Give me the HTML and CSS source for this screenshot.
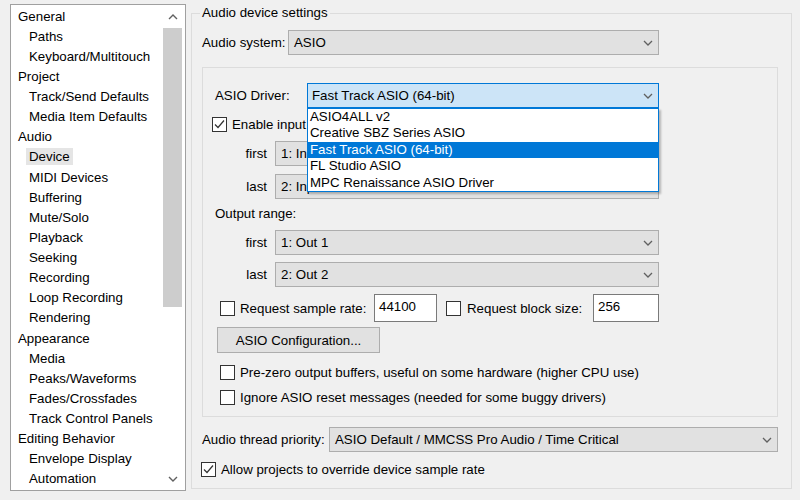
FILE: index.html
```html
<!DOCTYPE html>
<html lang="en">
<head>
    <meta charset="UTF-8">
    <title>Preferences - Audio Device</title>
    <link rel="stylesheet" href="styles.css">
</head>
<body>
    <div class="window">
        <!-- 왼쪽 트리 -->
        <div class="tree">
            <ul class="tree-list">
                <li class="top">General</li>
                <li class="sub">Paths</li>
                <li class="sub">Keyboard/Multitouch</li>
                <li class="top">Project</li>
                <li class="sub">Track/Send Defaults</li>
                <li class="sub">Media Item Defaults</li>
                <li class="top">Audio</li>
                <li class="sub"><span class="current">Device</span></li>
                <li class="sub">MIDI Devices</li>
                <li class="sub">Buffering</li>
                <li class="sub">Mute/Solo</li>
                <li class="sub">Playback</li>
                <li class="sub">Seeking</li>
                <li class="sub">Recording</li>
                <li class="sub">Loop Recording</li>
                <li class="sub">Rendering</li>
                <li class="top">Appearance</li>
                <li class="sub">Media</li>
                <li class="sub">Peaks/Waveforms</li>
                <li class="sub">Fades/Crossfades</li>
                <li class="sub">Track Control Panels</li>
                <li class="top">Editing Behavior</li>
                <li class="sub">Envelope Display</li>
                <li class="sub">Automation</li>
            </ul>
            <div class="scrollbar">
                <div class="sb-arrow">
                    <svg width="10" height="6" viewBox="0 0 10 6"><path d="M1 5l4-4 4 4" fill="none" stroke="#606060" stroke-width="1.4"/></svg>
                </div>
                <div class="sb-track"><div class="sb-thumb"></div></div>
                <div class="sb-arrow">
                    <svg width="10" height="6" viewBox="0 0 10 6"><path d="M1 1l4 4 4-4" fill="none" stroke="#606060" stroke-width="1.4"/></svg>
                </div>
            </div>
        </div>

        <!-- 오른쪽 설정 -->
        <fieldset class="group">
            <legend>Audio device settings</legend>

            <div class="row system-row">
                <span class="label system-label">Audio system:</span>
                <div class="combo system-combo">
                    <span>ASIO</span>
                    <svg class="chev" width="10" height="6" viewBox="0 0 10 6"><path d="M1 1l4 4 4-4" fill="none" stroke="#606060" stroke-width="1.3"/></svg>
                </div>
            </div>

            <div class="inner">
                <div class="row driver-row">
                    <span class="label driver-label">ASIO Driver:</span>
                    <div class="combo driver-combo open">
                        <span>Fast Track ASIO (64-bit)</span>
                        <svg class="chev" width="10" height="6" viewBox="0 0 10 6"><path d="M1 1l4 4 4-4" fill="none" stroke="#606060" stroke-width="1.3"/></svg>
                        <ul class="dropdown">
                            <li>ASIO4ALL v2</li>
                            <li>Creative SBZ Series ASIO</li>
                            <li class="selected">Fast Track ASIO (64-bit)</li>
                            <li>FL Studio ASIO</li>
                            <li>MPC Renaissance ASIO Driver</li>
                        </ul>
                    </div>
                </div>

                <div class="row check-row enable-row">
                    <span class="check checked">
                        <svg width="13" height="13" viewBox="0 0 13 13"><path d="M2 6.5l3 3 6-7" fill="none" stroke="#333" stroke-width="1.2"/></svg>
                    </span>
                    <span>Enable input range:</span>
                </div>

                <div class="row range-row in-first">
                    <span class="range-label">first</span>
                    <div class="combo range-combo">
                        <span>1: Input 1</span>
                        <svg class="chev" width="10" height="6" viewBox="0 0 10 6"><path d="M1 1l4 4 4-4" fill="none" stroke="#606060" stroke-width="1.3"/></svg>
                    </div>
                </div>
                <div class="row range-row in-last">
                    <span class="range-label">last</span>
                    <div class="combo range-combo">
                        <span>2: Input 2</span>
                        <svg class="chev" width="10" height="6" viewBox="0 0 10 6"><path d="M1 1l4 4 4-4" fill="none" stroke="#606060" stroke-width="1.3"/></svg>
                    </div>
                </div>

                <div class="row output-label">Output range:</div>

                <div class="row range-row out-first">
                    <span class="range-label">first</span>
                    <div class="combo range-combo">
                        <span>1: Out 1</span>
                        <svg class="chev" width="10" height="6" viewBox="0 0 10 6"><path d="M1 1l4 4 4-4" fill="none" stroke="#606060" stroke-width="1.3"/></svg>
                    </div>
                </div>
                <div class="row range-row out-last">
                    <span class="range-label">last</span>
                    <div class="combo range-combo">
                        <span>2: Out 2</span>
                        <svg class="chev" width="10" height="6" viewBox="0 0 10 6"><path d="M1 1l4 4 4-4" fill="none" stroke="#606060" stroke-width="1.3"/></svg>
                    </div>
                </div>

                <div class="row request-row">
                    <span class="check"></span>
                    <span class="req-label rate-label">Request sample rate:</span>
                    <span class="textbox rate-box">44100</span>
                    <span class="check block-check"></span>
                    <span class="req-label block-label">Request block size:</span>
                    <span class="textbox block-box">256</span>
                </div>

                <div class="row">
                    <button class="button">ASIO Configuration...</button>
                </div>

                <div class="row check-row opt-row prezero-row">
                    <span class="check"></span>
                    <span>Pre-zero output buffers, useful on some hardware (higher CPU use)</span>
                </div>
                <div class="row check-row opt-row ignore-row">
                    <span class="check"></span>
                    <span>Ignore ASIO reset messages (needed for some buggy drivers)</span>
                </div>
            </div>

            <div class="row thread-row">
                <span class="label thread-label">Audio thread priority:</span>
                <div class="combo thread-combo">
                    <span>ASIO Default / MMCSS Pro Audio / Time Critical</span>
                    <svg class="chev" width="10" height="6" viewBox="0 0 10 6"><path d="M1 1l4 4 4-4" fill="none" stroke="#606060" stroke-width="1.3"/></svg>
                </div>
            </div>

            <div class="row check-row allow-row">
                <span class="check checked">
                    <svg width="13" height="13" viewBox="0 0 13 13"><path d="M2 6.5l3 3 6-7" fill="none" stroke="#333" stroke-width="1.2"/></svg>
                </span>
                <span>Allow projects to override device sample rate</span>
            </div>
        </fieldset>
    </div>
</body>
</html>
```

FILE: styles.css
```css
body {
    margin: 0;
    background: #f0f0f0;
    font-family: "Liberation Sans", Arial, sans-serif;
    font-size: 13.3px;
    color: #000;
}

.window {
    display: flex;
    align-items: flex-start;
    padding: 4px 0 0 10px;
    height: 496px;
    box-sizing: border-box;
}

/* tree */
.tree {
    display: flex;
    width: 176px;
    height: 487px;
    box-sizing: border-box;
    border: 1px solid #a0a0a0;
    background: #fff;
}

.tree-list {
    flex: 1;
    list-style: none;
    margin: 0;
    padding: 1.5px 0 0 0;
}

.tree-list li {
    height: 20.13px;
    line-height: 20.13px;
    white-space: nowrap;
}

.tree-list .top {
    padding-left: 7px;
}

.tree-list .sub {
    padding-left: 18px;
}

.current {
    display: inline-block;
    background: #e5e5e5;
    line-height: 17px;
    padding: 0 3px;
    margin-left: -3px;
}

.scrollbar {
    width: 19px;
    margin-right: 3px;
    display: flex;
    flex-direction: column;
    background: #fff;
}

.sb-arrow {
    height: 23px;
    display: flex;
    align-items: center;
    justify-content: center;
}

.sb-track {
    flex: 1;
}

.sb-thumb {
    height: 279px;
    background: #cdcdcd;
}

/* group */
.group {
    margin: 0 0 0 5px;
    padding: 0 13px 0 10px;
    width: 601px;
    height: 485px;
    box-sizing: border-box;
    border: 1px solid #dcdcdc;
}

.group legend {
    padding: 0 2px;
    margin-left: -2px;
    line-height: 18px;
}

.row {
    display: flex;
    align-items: center;
}

.combo {
    position: relative;
    display: flex;
    align-items: center;
    justify-content: space-between;
    height: 25px;
    box-sizing: border-box;
    padding: 0 5px 0 5px;
    background: #e1e1e1;
    border: 1px solid #adadad;
    white-space: nowrap;
}

.chev {
    flex: none;
}

.system-row {
    margin-top: 8px;
}

.system-label {
    width: 86px;
}

.system-combo {
    width: 371px;
}

.inner {
    margin-top: 12px;
    height: 350px;
    box-sizing: border-box;
    border: 1px solid #dcdcdc;
    padding: 0 0 0 12px;
}

.driver-row {
    margin-top: 15px;
}

.driver-label {
    width: 92px;
}

.driver-combo {
    width: 352px;
    background: #cce4f7;
    border-color: #0078d7;
    padding-left: 4px;
}

.dropdown {
    position: absolute;
    top: 24px;
    left: -1px;
    width: 352px;
    box-sizing: border-box;
    margin: 0;
    padding: 0;
    list-style: none;
    background: #fff;
    border: 1px solid #0078d7;
    box-shadow: 2px 2px 2px rgba(0, 0, 0, 0.25);
    z-index: 2;
}

.dropdown li {
    height: 16.4px;
    line-height: 16.4px;
    padding-left: 2px;
}

.dropdown .selected {
    background: #0078d7;
    color: #fff;
}

.check {
    flex: none;
    display: inline-flex;
    align-items: center;
    justify-content: center;
    width: 15px;
    height: 15px;
    box-sizing: border-box;
    border: 1px solid #333;
    background: #fff;
    margin-right: 5px;
}

.enable-row {
    margin-top: 9px;
    margin-left: -3px;
}

.range-label {
    width: 52px;
    text-align: right;
    margin-right: 8px;
}

.range-combo {
    width: 384px;
}

.in-first {
    margin-top: 9px;
}

.in-last {
    margin-top: 8px;
}

.output-label {
    margin-top: 5px;
    height: 18px;
}

.out-first {
    margin-top: 8px;
}

.out-last {
    margin-top: 7px;
}

.request-row {
    margin-top: 7px;
    margin-left: 5px;
}

.req-label {
    white-space: nowrap;
}

.rate-label {
    width: 134px;
}

.block-label {
    width: 126px;
}

.block-check {
    margin-left: 9px;
    margin-right: 6px;
}

.textbox {
    height: 28px;
    box-sizing: border-box;
    border: 1px solid #7a7a7a;
    background: #fff;
    padding: 3px 0 0 4px;
    line-height: 17px;
}

.rate-box {
    width: 63px;
}

.block-box {
    width: 66px;
}

.button {
    margin: 5px 0 0 2px;
    width: 163px;
    height: 26px;
    background: #e1e1e1;
    border: 1px solid #adadad;
    font: inherit;
    color: #000;
    padding: 0;
}

.opt-row {
    margin-left: 5px;
}

.prezero-row {
    margin-top: 12px;
}

.ignore-row {
    margin-top: 10px;
}

.thread-row {
    margin-top: 10px;
}

.thread-label {
    width: 127px;
}

.thread-combo {
    width: 449px;
}

.allow-row {
    margin-top: 10px;
    margin-left: -1px;
}
```
